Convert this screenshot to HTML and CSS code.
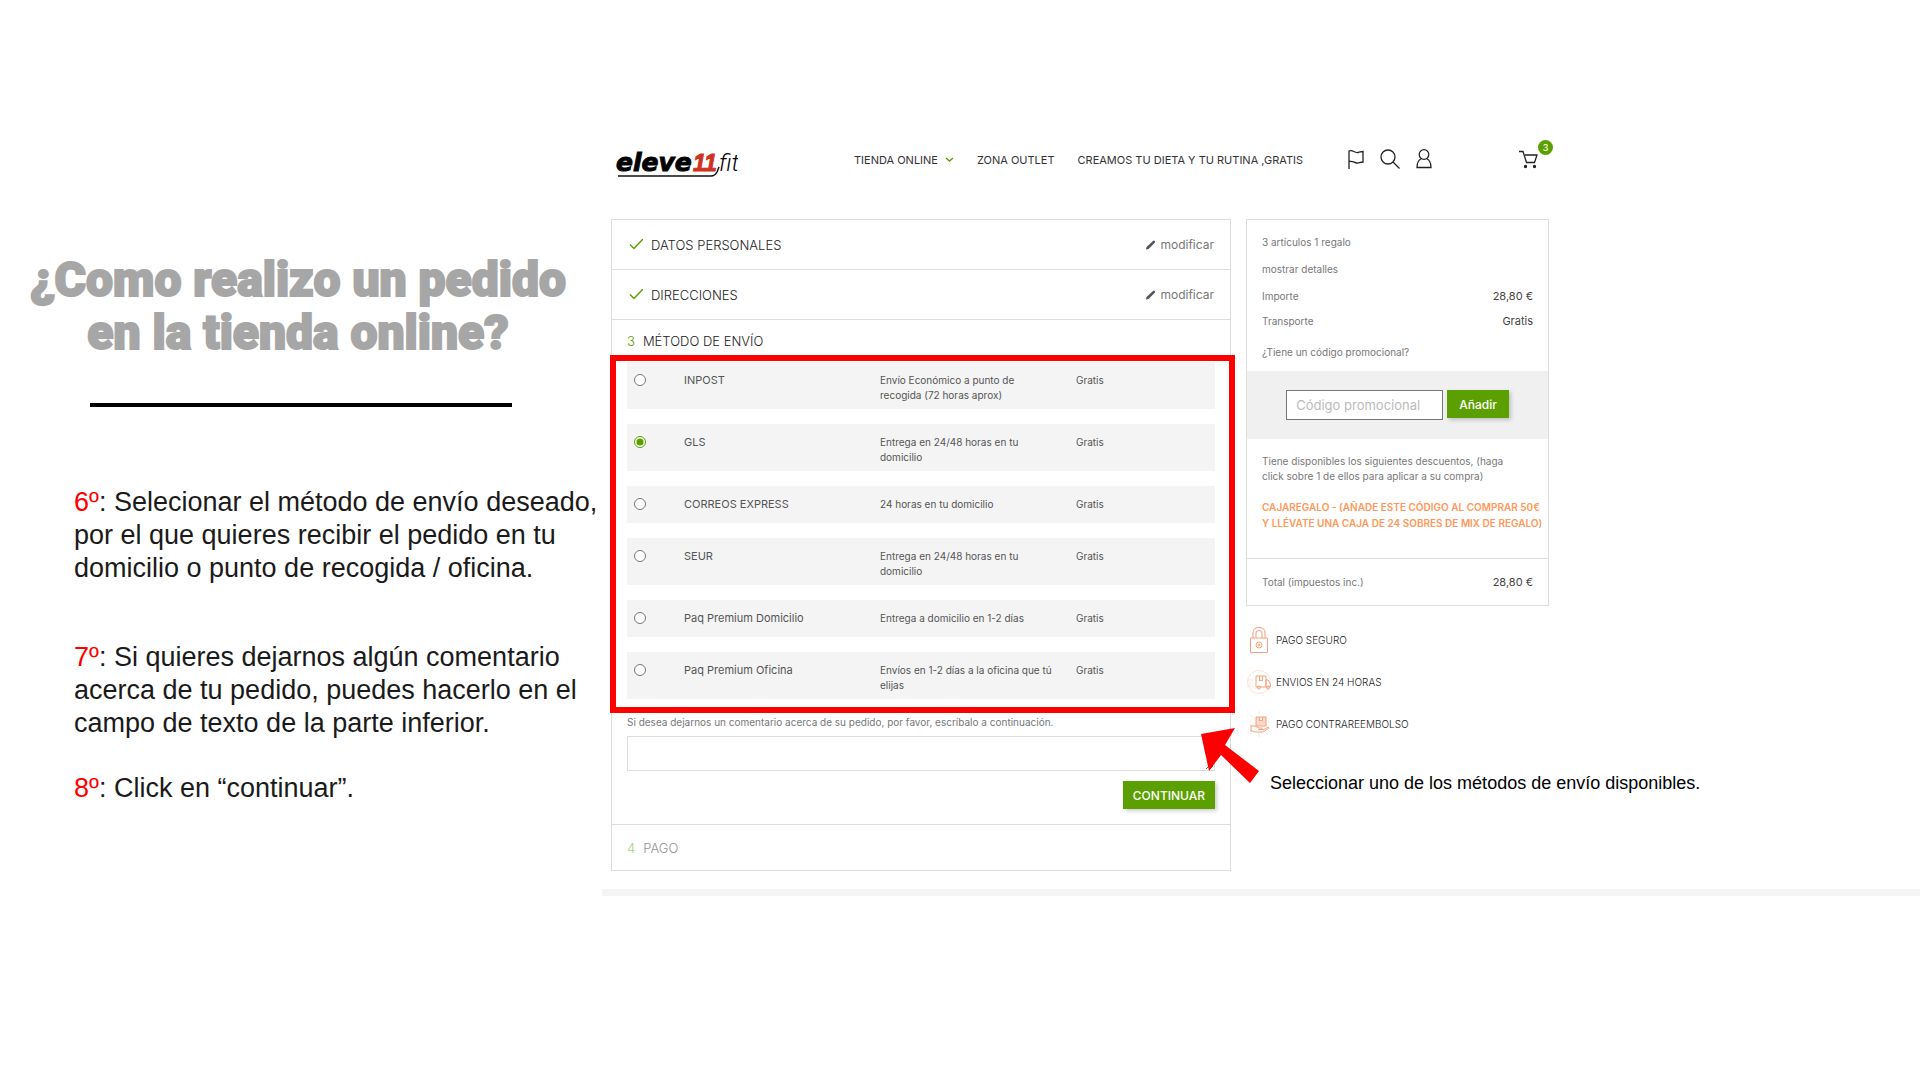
FILE: index.html
```html
<!DOCTYPE html>
<html lang="es">
<head>
  <meta charset="UTF-8">
  <meta name="viewport" content="width=device-width, initial-scale=1.0">
  <title>Como realizo un pedido</title>
  <link rel="stylesheet" href="styles.css">
</head>
<body>
  <div class="page">
    <section class="guide">
      <h1>¿Como realizo un pedido<br>en la tienda online?</h1>
      <hr class="guide-line">
      <div class="guide-text">
        <p class="step-long"><span class="num">6º</span>: Selecionar el método de envío deseado,<br>por el que quieres recibir el pedido en tu<br>domicilio o punto de recogida / oficina.</p>
        <p><span class="num">7º</span>: Si quieres dejarnos algún comentario<br>acerca de tu pedido, puedes hacerlo en el<br>campo de texto de la parte inferior.</p>
        <p><span class="num">8º</span>: Click en “continuar”.</p>
      </div>
    </section>

    <div class="shop">
      <header class="header">
        <a href="#" class="logo" aria-label="eleve11fit">
          <svg width="122" height="40" viewBox="0 0 122 40">
            <text x="0" y="31" class="logo-eleve">eleve</text>
            <text x="77" y="31" class="logo-11">11</text>
            <text x="103" y="31" class="logo-fit">fit</text>
            <path d="M2 36H95Q99 36 101 32L103 27" fill="none" stroke="#111" stroke-width="1.500"/>
          </svg>
        </a>
        <nav class="nav">
          <a href="#">TIENDA ONLINE
            <svg width="9" height="6" viewBox="0 0 9 6"><path d="M1 1l3.500 3L8 1" fill="none" stroke="#5c9f00" stroke-width="1.500"/></svg>
          </a>
          <a href="#">ZONA OUTLET</a>
          <a href="#">CREAMOS TU DIETA Y TU RUTINA ,GRATIS</a>
        </nav>
        <div class="tools">
          <a href="#" aria-label="Idioma"><svg width="20" height="20" viewBox="0 0 20 20"><path d="M3 20V2C7 .5 8 4 12 3.500c2-.2 3-1 5-1V13c-3 0-4 1.300-6 1C8 13.600 7 11.500 3 12.500"/></svg></a>
          <a href="#" aria-label="Buscar"><svg width="20" height="20" viewBox="0 0 20 20"><circle cx="8" cy="8" r="7"/><path d="M13 13l6.500 6.500"/></svg></a>
          <a href="#" aria-label="Cuenta"><svg width="20" height="20" viewBox="0 0 20 20"><circle cx="10" cy="5.500" r="4.800"/><path d="M7.500 9.500C4 11 3 15 3 18.500h14c0-3.500-1-7.500-4.500-9"/></svg></a>
        </div>
        <a href="#" class="cart" aria-label="Carrito">
          <svg width="20" height="20" viewBox="0 0 20 20"><path d="M1 1.500h4l3.500 11h8L19 5H7"/><circle cx="7.500" cy="16.500" r="1" class="wheel"/><circle cx="16.500" cy="16.500" r="1" class="wheel"/></svg>
          <span class="badge">3</span>
        </a>
      </header>

      <div class="columns">
        <main class="checkout">
          <section class="step">
            <h2><svg width="15" height="12" viewBox="0 0 15 12"><path d="M2 5.500l4 4L15 0" fill="none" stroke="#5c9f00" stroke-width="1.500"/></svg>DATOS PERSONALES</h2>
            <a href="#" class="edit"><svg width="10" height="10" viewBox="0 0 10 10"><path d="M0 9.500l.5-2.500L7 1Q8 .2 8.700 1t.1 1.700L2.500 9z"/></svg>modificar</a>
          </section>
          <section class="step">
            <h2><svg width="15" height="12" viewBox="0 0 15 12"><path d="M2 5.500l4 4L15 0" fill="none" stroke="#5c9f00" stroke-width="1.500"/></svg>DIRECCIONES</h2>
            <a href="#" class="edit"><svg width="10" height="10" viewBox="0 0 10 10"><path d="M0 9.500l.5-2.500L7 1Q8 .2 8.700 1t.1 1.700L2.500 9z"/></svg>modificar</a>
          </section>
          <section class="delivery">
            <h2><span class="step-num">3</span>MÉTODO DE ENVÍO</h2>
            <form>
              <div class="options">
                <label class="option"><input type="radio" name="envio"><span class="name">INPOST</span><span class="desc">Envío Económico a punto de recogida (72 horas aprox)</span><span>Gratis</span></label>
                <label class="option"><input type="radio" name="envio" checked><span class="name">GLS</span><span class="desc">Entrega en 24/48 horas en tu domicilio</span><span>Gratis</span></label>
                <label class="option"><input type="radio" name="envio"><span class="name">CORREOS EXPRESS</span><span class="desc">24 horas en tu domicilio</span><span>Gratis</span></label>
                <label class="option"><input type="radio" name="envio"><span class="name">SEUR</span><span class="desc">Entrega en 24/48 horas en tu domicilio</span><span>Gratis</span></label>
                <label class="option"><input type="radio" name="envio"><span class="name">Paq Premium Domicilio</span><span class="desc">Entrega a domicilio en 1-2 días</span><span>Gratis</span></label>
                <label class="option"><input type="radio" name="envio"><span class="name">Paq Premium Oficina</span><span class="desc">Envíos en 1-2 días a la oficina que tú elijas</span><span>Gratis</span></label>
                <div class="highlight"></div>
              </div>
              <label class="comment-label" for="comentario">Si desea dejarnos un comentario acerca de su pedido, por favor, escríbalo a continuación.</label>
              <div class="comment">
                <textarea id="comentario"></textarea>
                <svg class="arrow" width="58" height="56" viewBox="0 0 58 56"><path d="M0 6L34 0L24 17L58 43L49 55L20 27L8 43z" fill="#f00"/></svg>
                <p class="caption">Seleccionar uno de los métodos de envío disponibles.</p>
              </div>
              <div class="actions"><button type="button" class="btn">CONTINUAR</button></div>
            </form>
          </section>
          <section class="step payment">
            <h2><span class="step-num">4</span>PAGO</h2>
          </section>
        </main>

        <aside class="side">
          <div class="summary">
            <div class="summary-top">
              <p>3 artículos 1 regalo</p>
              <a href="#">mostrar detalles</a>
              <div class="line"><span>Importe</span><span class="price">28,80 €</span></div>
              <div class="line"><span>Transporte</span><span class="price">Gratis</span></div>
              <label for="codigo">¿Tiene un código promocional?</label>
            </div>
            <div class="promo">
              <input type="text" id="codigo" placeholder="Código promocional">
              <button type="button" class="btn">Añadir</button>
            </div>
            <div class="discounts">
              <p>Tiene disponibles los siguientes descuentos, (haga<br>click sobre 1 de ellos para aplicar a su compra)</p>
              <a href="#">CAJAREGALO - (AÑADE ESTE CÓDIGO AL COMPRAR 50€<br>Y LLÉVATE UNA CAJA DE 24 SOBRES DE MIX DE REGALO)</a>
            </div>
            <div class="total"><span>Total (impuestos inc.)</span><span class="price">28,80 €</span></div>
          </div>
          <ul class="perks">
            <li>
              <svg width="25" height="28" viewBox="0 0 25 28"><path d="M4.500 12h17v14.500h-17zM7 12V7q0-5.500 6-5.500T19 7v5M10 12V7q0-2.500 3-2.500T16 7v5"/><circle cx="13" cy="19" r="3"/><circle cx="13" cy="19" r="1"/></svg>
              PAGO SEGURO
            </li>
            <li>
              <svg width="25" height="28" viewBox="0 0 25 28"><circle cx="13" cy="14" r="11.500" class="pale"/><path d="M1 12h6M3 15h4M1 18h6" class="pale"/><path d="M10 8h10v11H10zM20 12h2l2.500 4v3H20zM13.500 8v5l1.500-1 1.500 1V8"/><circle cx="13" cy="19.500" r="1.500"/><circle cx="22" cy="19.500" r="1.500"/></svg>
              ENVIOS EN 24 HORAS
            </li>
            <li>
              <svg width="25" height="28" viewBox="0 0 25 28"><path d="M10 7h10v9H10zM13.500 7v4l1.500-1 1.500 1V7" class="tint"/><path d="M5 16h4l4 2h3v1.500h-4 6l4-2.500 1 1-6 4h-8l-4-1.500M5 15v7"/><path d="M13 1v3M4 5l2 2M22 5l-2 2M3 12h2M22 12h2M13 24v3M6 23l-2 2M20 23l2 2" class="pale"/></svg>
              PAGO CONTRAREEMBOLSO
            </li>
          </ul>
        </aside>
      </div>
      <div class="footer-line"></div>
    </div>
  </div>
</body>
</html>
```
FILE: styles.css
```css
* {
  box-sizing: border-box;
}
body {
  margin: 0;
  background-color: #fff;
  font-family: Inter, "Open Sans", sans-serif;
  font-size: 10px;
  font-weight: 400;
  line-height: 15px;
  color: #777;
}
h1, h2, p, ul {
  margin: 0;
  padding: 0;
}
a {
  color: inherit;
  text-decoration: none;
}
.page {
  display: grid;
  grid-template-columns: 602fr 1318fr;
}

/* guide */
.guide {
  padding-top: 253px;
}
.guide h1 {
  font-family: Impact, Roboto, sans-serif;
  font-size: 48px;
  font-weight: 900;
  line-height: 53px;
  text-align: center;
  color: #a6a6a6;
  -webkit-text-stroke: 2px #a6a6a6;
  white-space: nowrap;
  padding-right: 6px;
}
.guide-line {
  width: 70%;
  height: 4px;
  margin: 44px auto 0;
  border: none;
  background-color: #000;
}
.guide-text {
  padding: 79px 0 0 74px;
  font-family: "Liberation Sans", Arial, sans-serif;
  font-size: 27px;
  line-height: 33px;
  color: #1a1a1a;
  white-space: nowrap;
}
.guide-text p {
  margin-bottom: 32px;
}
.guide-text .step-long {
  margin-bottom: 56px;
}
.num {
  color: #f00;
}

/* header */
.shop {
  padding-top: 136px;
}
.header {
  display: flex;
  align-items: center;
  max-width: 956px;
  height: 48px;
  padding-left: 14px;
  color: #333;
}
.header svg {
  display: block;
  fill: none;
  stroke: #222;
  stroke-width: 1.3;
}
.logo {
  margin-right: 116px;
}
.header .logo text {
  stroke: none;
  fill: #000;
}
.header .logo .logo-eleve {
  font: italic 700 25px "DejaVu Sans", sans-serif;
  stroke: #000;
  stroke-width: 1;
}
.header .logo .logo-11 {
  fill: #d0321f;
  stroke: #d0321f;
  stroke-width: 1;
  font: italic 700 23px "Liberation Sans", Arial, sans-serif;
}
.logo-fit {
  font: italic 300 24px Roboto, sans-serif;
}
.nav {
  display: flex;
  gap: 23px;
  font-size: 11px;
}
.nav a {
  display: flex;
  align-items: center;
  gap: 7px;
  white-space: nowrap;
}
.tools {
  display: flex;
  gap: 14px;
  margin-left: 43px;
  padding-bottom: 2px;
}
.cart {
  position: relative;
  margin-left: auto;
  margin-right: 20px;
}
.header .wheel {
  fill: #222;
}
.badge {
  position: absolute;
  top: -10px;
  right: -15px;
  width: 15px;
  height: 15px;
  border-radius: 50%;
  background-color: #5c9f00;
  color: #fff;
  font-size: 9px;
  font-weight: 500;
  text-align: center;
}

/* checkout */
.columns {
  display: flex;
  align-items: flex-start;
  gap: 15px;
  max-width: 947px;
  margin-top: 35px;
  padding-left: 9px;
}
.checkout {
  flex: 1;
  border: 1px solid #ddd;
}
.step {
  display: flex;
  justify-content: space-between;
  align-items: center;
  height: 50px;
  padding: 0 16px;
  border-bottom: 1px solid #ddd;
}
h2 {
  display: flex;
  align-items: center;
  gap: 8px;
  font-size: 13px;
  font-weight: 300;
  line-height: 20px;
  color: #222;
}
.edit {
  display: flex;
  align-items: center;
  gap: 4px;
  font-size: 12px;
}
.edit svg {
  fill: #555;
}
.step-num {
  color: #5c9f00;
}
.delivery {
  padding: 11px 15px 15px;
  border-bottom: 1px solid #ddd;
}
.options {
  position: relative;
  display: grid;
  gap: 15px;
  margin-top: 11px;
}
.option {
  display: grid;
  grid-template-columns: 42px 181fr 181fr 139fr;
  column-gap: 15px;
  align-items: start;
  padding: 11px 0 6px;
  min-height: 37px;
  background-color: #f4f4f4;
  color: #555;
}
.option input {
  width: 12px;
  height: 12px;
  margin: 1px 0 0 7px;
  accent-color: #5c9f00;
}
.option .name {
  font-size: 11px;
}
.option .desc {
  padding-right: 5px;
}
.highlight {
  position: absolute;
  inset: -7px -20px -14px -17px;
  border: 6px solid #f00;
}
.comment-label {
  display: block;
  margin: 16px 0 6px;
}
.comment {
  position: relative;
}
textarea {
  display: block;
  width: 100%;
  height: 35px;
  border: 1px solid #ddd;
}
.arrow {
  position: absolute;
  top: -8px;
  right: -44px;
}
.caption {
  position: absolute;
  top: 36px;
  left: calc(100% + 55px);
  font-family: "Liberation Sans", Arial, sans-serif;
  font-size: 18px;
  line-height: 22px;
  color: #000;
  white-space: nowrap;
}
.actions {
  display: flex;
  justify-content: flex-end;
  margin-top: 10px;
}
.btn {
  height: 28px;
  padding: 0 10px;
  border: none;
  background-color: #5c9f00;
  box-shadow: 2px 2px 4px rgba(0, 0, 0, 0.2);
  color: #fff;
  font-family: inherit;
  font-size: 12px;
  font-weight: 500;
  cursor: pointer;
}
.payment {
  height: 45px;
  padding: 0 15px;
  border-bottom: none;
}
.payment h2 {
  opacity: 0.5;
}

/* summary */
.side {
  width: 303px;
}
.summary {
  border: 1px solid #ddd;
}
.summary-top {
  display: grid;
  gap: 10px;
  padding: 15px 15px 11px;
}
.summary-top p,
.summary-top a {
  margin-bottom: 2px;
}
.summary-top label {
  margin-top: 6px;
}
.line, .total {
  display: flex;
  justify-content: space-between;
}
.price {
  font-size: 11px;
  color: #444;
}
.promo {
  display: flex;
  justify-content: center;
  align-items: flex-start;
  gap: 4px;
  padding: 19px 0;
  background-color: #f0f0f0;
}
.promo input {
  width: 157px;
  height: 30px;
  padding: 0 9px;
  border: 1px solid #777;
  font-family: inherit;
  font-size: 13px;
}
.promo .btn {
  padding: 0 12px;
}
.promo input::placeholder {
  color: #bbb;
}
.discounts {
  padding: 15px 15px 27px;
  white-space: nowrap;
}
.discounts a {
  display: block;
  margin-top: 15px;
  font-weight: 600;
  line-height: 16px;
  color: #ff9858;
}
.total {
  padding: 16px 15px 15px;
  border-top: 1px solid #ddd;
}
.perks {
  display: grid;
  gap: 14px;
  margin-top: 20px;
  list-style: none;
  font-weight: 300;
  color: #222;
}
.perks li {
  display: flex;
  align-items: center;
  gap: 5px;
}
.perks svg {
  fill: none;
  stroke: #f3a27f;
}
.perks .pale {
  stroke: #fbe3d8;
}
.perks .tint {
  fill: #fbd9ca;
}
.footer-line {
  height: 7px;
  margin-top: 18px;
  background-color: #f4f4f4;
}
```
